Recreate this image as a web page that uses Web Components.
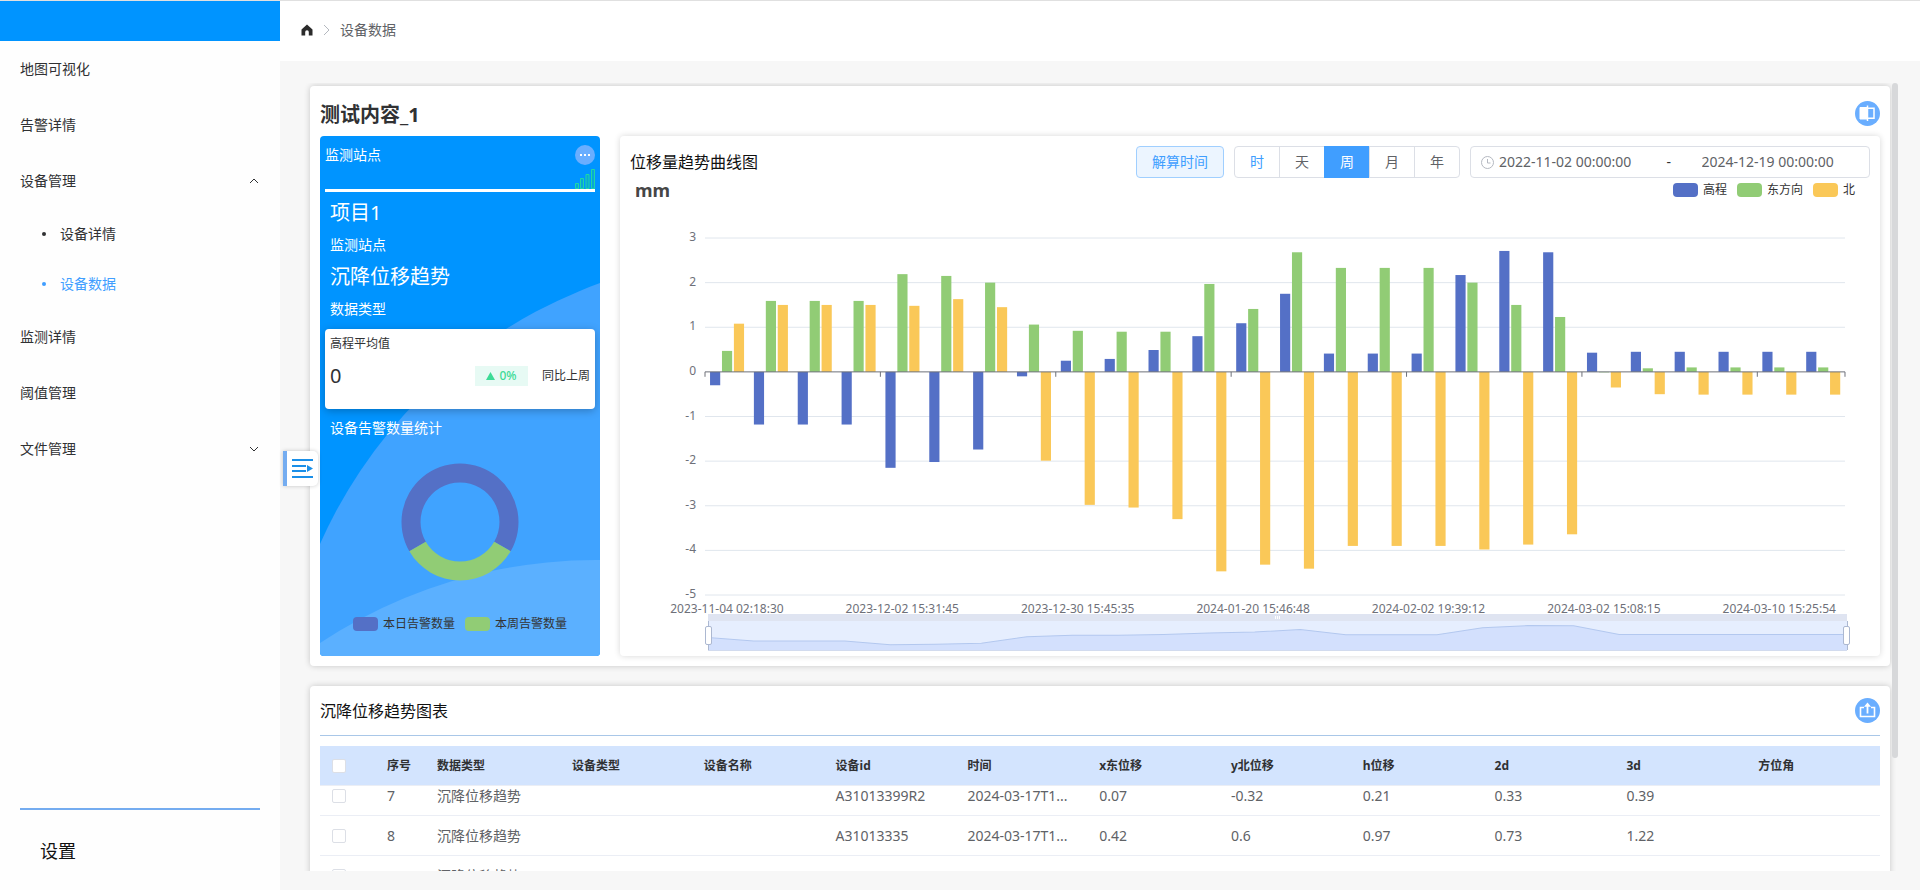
<!DOCTYPE html>
<html lang="zh-CN">
<head>
<meta charset="utf-8">
<title>设备数据</title>
<style>
  html, body { margin: 0; height: 100%; }
  body {
    font-family: "Noto Sans", "Noto Sans CJK SC", sans-serif;
    font-size: 14px; line-height: 20px; color: #303133; background: #f7f7f7;
  }
</style>
</head>
<body>
<app-shell>
  <side-nav slot="nav">
    <nav-item>地图可视化</nav-item>
    <nav-item>告警详情</nav-item>
    <nav-item arrow="up">设备管理</nav-item>
    <nav-item sub>设备详情</nav-item>
    <nav-item sub active>设备数据</nav-item>
    <nav-item>监测详情</nav-item>
    <nav-item>阈值管理</nav-item>
    <nav-item arrow="down">文件管理</nav-item>
    <a slot="footer" href="#settings">设置</a>
  </side-nav>
  <top-bar slot="top">设备数据</top-bar>

  <page-card>
    <h2 slot="title" style="margin:0;font-size:20px;line-height:38px">测试内容_1</h2>
    <round-button slot="action" label="对比" icon="split"></round-button>
    <panel-row>
      <station-panel slot="aside"></station-panel>
      <trend-card>位移量趋势曲线图</trend-card>
    </panel-row>
  </page-card>

  <page-card ruled>
    <h3 slot="title" style="margin:0;font-size:16px;font-weight:400;line-height:30px;color:#111">沉降位移趋势图表</h3>
    <round-button slot="action" label="导出" icon="export"></round-button>
    <record-table></record-table>
  </page-card>
</app-shell>

<script>
const define = (name, html, setup) => customElements.define(name, class extends HTMLElement {
  connectedCallback() {
    if (this.shadowRoot) return;
    const tpl = document.createElement('template');
    tpl.innerHTML = typeof html === 'function' ? html(this) : html;
    this.attachShadow({ mode: 'open' }).append(tpl.content.cloneNode(true));
    if (setup) setup(this, this.shadowRoot);
  }
});

/* ---------- page frame ---------- */
define('app-shell', `
<style>
  :host { display: flex; height: 100vh; border-top: 1px solid #e0e0e0; box-sizing: border-box; }
  main { flex: 1; min-width: 0; display: flex; flex-direction: column; position: relative; }
  .view { flex: 1; min-height: 0; margin: 22px 22px 19px 20px; position: relative; overflow: hidden; }
  .content { display: flex; flex-direction: column; gap: 20px; padding: 3px 8px 0 10px; }
  .thumb { position: absolute; top: 0; right: 0; width: 6px; height: 675px; border-radius: 3px; background: #d7d8da; }
  .toggle { position: absolute; left: 3px; top: 450px; width: 35px; height: 35px; padding: 0 0 0 4px; border: 0;
    border-left: 4px solid #74acf0; border-radius: 0 5px 5px 0; background: #fff; box-shadow: 0 0 4px rgba(0,0,0,.2); }
  svg { display: block; }
</style>
<slot name="nav"></slot>
<main>
  <slot name="top"></slot>
  <div class="view"><div class="content"><slot></slot></div><div class="thumb"></div></div>
  <button class="toggle" aria-label="展开面板">
    <svg width="24" height="21" viewBox="0 0 24 21" fill="none" stroke="#1a8fe8" stroke-width="2">
      <path d="M1 2H22M1 8H15M1 13H15M1 19H22"/><path d="M16 7L22 10.500L16 14Z" fill="#1a8fe8" stroke="none"/>
    </svg>
  </button>
</main>`);

define('side-nav', `
<style>
  :host { display: flex; flex-direction: column; flex: 0 0 280px; background: #fefefe; }
  .brand { height: 40px; background: #0094ff; }
  nav { flex: 1; }
  footer { margin: 0 20px; border-top: 2px solid #74acf0; padding: 23px 20px 22px; height: 35px; }
  ::slotted(a) { font-size: 18px; line-height: 36px; color: #111; text-decoration: none; }
</style>
<div class="brand"></div>
<nav><slot></slot></nav>
<footer><slot name="footer"></slot></footer>`);

define('nav-item', `
<style>
  :host { display: block; }
  a { display: flex; align-items: center; height: 56px; padding: 0 20px; color: #303133; text-decoration: none; }
  :host([sub]) a { height: 50px; padding: 0 20px 0 42px; gap: 14px; }
  :host([active]) a { color: #409eff; }
  i { display: none; width: 4px; height: 4px; border-radius: 50%; background: currentColor; }
  :host([sub]) i { display: block; }
  span { flex: 1; }
  svg { display: none; fill: none; stroke: #303133; }
  :host([arrow]) svg { display: block; }
  :host([arrow="up"]) svg { transform: rotate(180deg); }
</style>
<a href="#"><i></i><span><slot></slot></span>
<svg width="12" height="12" viewBox="0 0 12 12"><path d="M2 4L6 8L10 4"/></svg></a>`);

define('top-bar', `
<style>
  :host { display: flex; align-items: center; gap: 10px; height: 60px; padding: 0 20px 2px; background: #fff; color: #606266; box-sizing: border-box; }
  a { display: flex; padding-left: 1px; }
</style>
<a href="#" aria-label="首页"><svg width="12" height="12" viewBox="0 0 12 12"><path d="M6 .5L11.500 5.500V11.500H7.800V8A1.800 1.800 0 0 0 4.200 8V11.500H.5V5.500Z" fill="#2b2b2b"/></svg></a>
<svg width="7" height="12" viewBox="0 0 7 12" fill="none" stroke="#b4b8bf"><path d="M1 1L6 6L1 11"/></svg>
<span><slot></slot></span>`);

define('page-card', `
<style>
  :host { display: block; background: #fff; border-radius: 4px; padding: 10px; box-shadow: 0 0 6px rgba(0,0,0,.2); }
  header { display: flex; justify-content: space-between; align-items: flex-start; height: 40px; }
  .act { padding-top: 5px; }
  :host([ruled]) header { height: 39px; margin-bottom: 10px; border-bottom: 1px solid #a9c7e8; }
  :host([ruled]) .act { padding-top: 2px; }
</style>
<header><slot name="title"></slot><div class="act"><slot name="action"></slot></div></header>
<slot></slot>`);

const ICONS = {
  split: '<path d="M5 6.500H12V18H5Z" fill="#fff"/><path d="M12.500 4.500V20" stroke-width="1.500"/><path d="M13 7.200H19V17.300H13" stroke-width="1.500"/>',
  export: '<path d="M9 9.500H5.500V18.500H19.500V9.500H16" stroke-width="1.600"/><path d="M12.500 15.500V8" stroke-width="1.800"/><path d="M12.500 4.500L16 8.800H9Z" fill="#fff" stroke="none"/>',
};
define('round-button', el => `
<style>
  :host { display: block; }
  button { display: block; width: 25px; height: 25px; padding: 0; border: 0; border-radius: 50%; background: #6aaeff; }
  svg { display: block; }
</style>
<button aria-label="${el.getAttribute('label')}"><svg width="25" height="25" viewBox="0 0 25 25" fill="none" stroke="#fff">${ICONS[el.getAttribute('icon')]}</svg></button>`);

define('panel-row', `
<style>:host { display: grid; grid-template-columns: 280px minmax(0, 1fr); gap: 20px; }</style>
<slot name="aside"></slot><slot></slot>`);

/* ---------- legend ---------- */
define('legend-key', el => `
<style>
  :host { display: flex; align-items: center; gap: 5px; font-size: 12px; line-height: 16px; color: #333; }
  i { width: 25px; height: 14px; border-radius: 4px; background: ${el.getAttribute('color')}; }
</style><i></i><slot></slot>`);

/* ---------- station panel ---------- */
const arc = (a, b, R, r) => {
  const p = (d, q) => `${(60 + q * Math.cos(d * Math.PI / 180)).toFixed(2)} ${(60 + q * Math.sin(d * Math.PI / 180)).toFixed(2)}`;
  const big = b - a > 180 ? 1 : 0;
  return `M${p(a, R)}A${R} ${R} 0 ${big} 1 ${p(b, R)}L${p(b, r)}A${r} ${r} 0 ${big} 0 ${p(a, r)}Z`;
};
define('station-panel', `
<style>
  :host { display: block; position: relative; overflow: hidden; box-sizing: border-box; height: 520px; padding: 0 5px; border-radius: 4px;
    color: #fff; background: #0094ff; }
  .waves { position: absolute; left: 0; top: 0; }
  .body { position: relative; }
  .head { display: flex; justify-content: space-between; border-bottom: 3px solid #fff; line-height: 38px; }
  .tools { display: flex; flex-direction: column; gap: 4px; padding-top: 9px; }
  button { width: 20px; height: 20px; padding: 0; border: 0; border-radius: 50%; background: #6aaeff; }
  svg { display: block; }
  dl { margin: 4px 5px 0; display: flex; flex-direction: column; }
  dt { line-height: 34px; font-size: 20px; }
  dd { margin: 0; line-height: 30px; }
  .stat { margin-top: 5px; padding: 5px 5px 23px; border-radius: 4px; background: #fff; color: #303133; font-size: 12px;
    box-shadow: 0 2px 8px rgba(0,0,0,.25); }
  .row { display: flex; align-items: center; margin-top: 12px; }
  .row b { flex: 1; font-size: 20px; font-weight: 400; }
  .badge { display: flex; align-items: center; justify-content: center; gap: 4px; width: 53px; margin-right: 14px; background: #e7faf4; color: #3ddb96; font-weight: 500; }
  .badge svg { fill: currentColor; }
  h4 { margin: 0 5px; font-size: 14px; font-weight: 400; line-height: 38px; }
  .donut { margin: 15px auto 34px; }
  .keys { display: flex; justify-content: center; gap: 10px; }
</style>
<svg class="waves" width="280" height="520"><circle cx="446" cy="606" r="488" fill="#40a3ff"/><circle cx="276" cy="924" r="500" fill="#5bb0ff"/></svg>
<div class="body">
  <div class="head"><span>监测站点</span>
    <div class="tools">
      <button aria-label="更多"><svg width="20" height="20"><path d="M5 9h2v2H5zM9 9h2v2H9zM13 9h2v2h-2z" fill="#fff"/></svg></button>
      <svg width="20" height="20" fill="#08a6d8" stroke="#1fd8a4"><path d="M.5 14.500h3v5h-3zM5.500 9.500h3v10h-3zM11 5.500h3v14h-3zM16.500 .5h3v19h-3z"/></svg>
    </div>
  </div>
  <dl><dt>项目1</dt><dd>监测站点</dd><dt>沉降位移趋势</dt><dd>数据类型</dd></dl>
  <div class="stat"><div>高程平均值</div>
    <div class="row"><b>0</b><span class="badge"><svg width="9" height="8" viewBox="0 0 9 8"><path d="M4.500 0L9 8H0Z"/></svg>0%</span><span>同比上周</span></div></div>
  <h4>设备告警数量统计</h4>
  <svg class="donut" width="120" height="120"><path d="${arc(150, 390, 58.500, 39.500)}" fill="#5470c6"/><path d="${arc(30, 150, 58.500, 39.500)}" fill="#91cc75"/></svg>
  <div class="keys"><legend-key color="#5470c6">本日告警数量</legend-key><legend-key color="#91cc75">本周告警数量</legend-key></div>
</div>`);

/* ---------- trend chart card ---------- */
define('trend-card', `
<style>
  :host { display: block; box-sizing: border-box; padding: 10px 10px 5px; border-radius: 4px; background: #fff; box-shadow: 0 0 6px rgba(0,0,0,.16); }
  header { display: flex; align-items: center; gap: 10px; }
  h3 { flex: 1; margin: 0; font-size: 16px; font-weight: 400; color: #111; }
  .solve { box-sizing: border-box; width: 88px; height: 32px; padding: 0; border: 1px solid #a0cfff; border-radius: 4px; background: #ecf5ff;
    color: #409eff; font: inherit; }
  fieldset { display: flex; margin: 0; padding: 0; border: 1px solid #dcdfe6; border-radius: 4px; }
  label { position: relative; width: 44px; line-height: 30px; text-align: center; color: #606266; }
  label + label { border-left: 1px solid #dcdfe6; }
  label input { position: absolute; inset: 0; margin: 0; opacity: 0; }
  label.hot { color: #409eff; }
  label:has(:checked) { background: #409eff; border-color: #409eff; color: #fff; box-shadow: 0 -1px #409eff, 0 1px #409eff; z-index: 1; }
  .range { box-sizing: border-box; display: flex; align-items: center; width: 400px; height: 32px; padding: 0 0 0 10px; border: 1px solid #dcdfe6; border-radius: 4px; }
  .range input { box-sizing: border-box; flex: 1; min-width: 0; padding: 0 0 0 5px; border: 0; background: none; color: #606266; font: inherit; }
  .range span { width: 30px; color: #303133; }
</style>
<header>
  <h3><slot></slot></h3>
  <button class="solve">解算时间</button>
  <fieldset aria-label="周期">
    <label class="hot"><input type="radio" name="p">时</label><label><input type="radio" name="p">天</label><label><input type="radio" name="p" checked>周</label><label><input type="radio" name="p">月</label><label><input type="radio" name="p">年</label>
  </fieldset>
  <div class="range">
    <svg width="13" height="13" viewBox="0 0 13 13" fill="none" stroke="#b4b8c0"><circle cx="6.500" cy="6.500" r="6"/><path d="M6.500 3V7H9.500"/></svg>
    <input aria-label="开始时间" value="2022-11-02 00:00:00"><span>-</span><input aria-label="结束时间" value="2024-12-19 00:00:00">
  </div>
</header>
<trend-chart></trend-chart>`);

const ELEV = [-.3,-1.18,-1.18,-1.18,-2.15,-2.02,-1.74,-.1,.25,.29,.49,.8,1.09,1.75,.41,.41,.41,2.17,2.71,2.68,.43,.45,.45,.45,.45,.45];
const EAST = [.47,1.59,1.59,1.59,2.19,2.15,2,1.06,.92,.9,.9,1.97,1.41,2.68,2.33,2.33,2.33,2,1.5,1.23,-.01,.08,.1,.1,.1,.1];
const NORTH = [1.08,1.5,1.5,1.5,1.48,1.63,1.45,-1.99,-2.98,-3.04,-3.3,-4.47,-4.32,-4.41,-3.9,-3.9,-3.9,-3.98,-3.87,-3.64,-.35,-.5,-.51,-.51,-.51,-.51];
const TIMES = ['2023-11-04 02:18:30','2023-12-02 15:31:45','2023-12-30 15:45:35','2024-01-20 15:46:48','2024-02-02 19:39:12','2024-03-02 15:08:15','2024-03-10 15:25:54'];
const bars = (data, color, k) => `<g fill="${color}">${data.map((v, i) =>
  `<rect x="${(i + .115 + k * .272).toFixed(3)}" width=".232" y="${(3 - Math.max(v, 0)).toFixed(2)}" height="${Math.abs(v)}"/>`).join('')}</g>`;
const trace = ELEV.map((v, i) => `${i} ${(15.3 - v * 3.94).toFixed(1)}`).join('L');

define('trend-chart', `
<style>
  :host { display: block; }
  .top { display: flex; justify-content: space-between; height: 24px; padding: 0 15px 0 5px; }
  h4 { margin: 0; font-size: 18px; line-height: 24px; color: #464646; }
  .keys { display: flex; align-items: center; gap: 10px; }
  .chart { display: grid; grid-template-columns: 66px minmax(0, 1fr); column-gap: 9px; margin: 36px 25px 0 0; color: #6e7079; font-size: 12px; }
  ol { display: flex; flex-direction: column; justify-content: space-between; margin: -8px 0 -6px; padding: 0; list-style: none; text-align: right; line-height: 14px; }
  svg { display: block; width: 100%; overflow: visible; }
  .plot { height: 357px; }
  line, .edge { vector-effect: non-scaling-stroke; shape-rendering: crispEdges; }
  .x { grid-column: 2; display: grid; grid-template-columns: repeat(26, minmax(0, 1fr)); line-height: 14px; padding-top: 7px; }
  .x span { grid-row: 1; display: flex; justify-content: center; white-space: nowrap; }
  .zoom { grid-column: 2; position: relative; margin: -2px -2px 0 3px; height: 37px; background: #e6eefe; border-top: 7px solid #dfe4f1;
    border-bottom: 1px solid #d2dbee; box-sizing: border-box; }
  .zoom svg { height: 29px; }
  .zoom i { position: absolute; top: 5px; width: 5px; height: 17px; border: 1px solid #acb8d1; border-radius: 2px; background: #fff; }
  .zoom i:first-of-type { left: -3px; }
  .zoom i:last-of-type { right: -3px; }
  .zoom b { position: absolute; top: -5px; left: 50%; width: 5px; height: 3px; margin-left: -3px;
    background: repeating-linear-gradient(90deg, #fff 0 1px, transparent 1px 2px); }
</style>
<div class="top"><h4>mm</h4><div class="keys"><legend-key color="#5470c6">高程</legend-key><legend-key color="#91cc75">东方向</legend-key><legend-key color="#fac858">北</legend-key></div></div>
<div class="chart">
  <ol>${[3,2,1,0,-1,-2,-3,-4,-5].map(n => `<li>${n}</li>`).join('')}</ol>
  <svg class="plot" viewBox="0 0 26 8" preserveAspectRatio="none">
    <g stroke="#e0e6ed">${[0,1,2,4,5,6,7,8].map(y => `<line x2="26" y1="${y}" y2="${y}"/>`).join('')}</g>
    ${bars(ELEV, '#5470c6', 0)}${bars(EAST, '#91cc75', 1)}${bars(NORTH, '#fac858', 2)}
    <g stroke="#6e7079"><line x2="26" y1="3" y2="3"/>${[0,4,8,12,16,20,24,26].map(x => `<line x1="${x}" x2="${x}" y1="3" y2="3.110"/>`).join('')}</g>
  </svg>
  <div class="x">${TIMES.map((t, i) => `<span style="grid-column:${i * 4 + 1}">${t}</span>`).join('')}</div>
  <div class="zoom">
    <svg viewBox="0 0 25 29" preserveAspectRatio="none"><path d="M${trace}V29H0Z" fill="#d3e0fd"/><path d="M${trace}" fill="none" stroke="#b3c8ef" vector-effect="non-scaling-stroke"/>
    <path class="edge" d="M0 0V29M25 0V29" stroke="#acb8d1"/></svg>
    <i></i><i></i><b></b>
  </div>
</div>`);

/* ---------- table ---------- */
const HEAD = ['序号','数据类型','设备类型','设备名称','设备id','时间','x东位移','y北位移','h位移','2d','3d','方位角'];
const ROWS = [
  ['7','沉降位移趋势','','','A31013399R2','2024-03-17T1...','0.07','-0.32','0.21','0.33','0.39',''],
  ['8','沉降位移趋势','','','A31013335','2024-03-17T1...','0.42','0.6','0.97','0.73','1.22',''],
  ['9','沉降位移趋势','','','A31013395R2','2024-03-17T1...','0.56','0.9','0.48','0.65','0.69',''],
];
define('record-table', `
<style>
  :host { display: block; height: 160px; overflow: hidden; }
  table { width: 100%; border-collapse: separate; border-spacing: 0; table-layout: fixed; color: #606266; margin-bottom: 60px; }
  col:nth-child(1) { width: 57px; } col:nth-child(2) { width: 50px; } col:nth-child(3) { width: 135px; }
  th, td { box-sizing: border-box; height: 40px; padding: 0 10px; border-bottom: 1px solid #ebeef5; text-align: left; white-space: nowrap; }
  th { position: sticky; top: 0; z-index: 1; background: #d3e4fe; color: #303133; font-size: 12px; }
  th:first-child, td:first-child { padding-left: 12px; }
  input { appearance: none; display: block; box-sizing: border-box; width: 14px; height: 14px; margin: 0; border: 1px solid #dcdfe6; border-radius: 2px; background: #fff; }
</style>
<table>
  <colgroup>${'<col>'.repeat(13)}</colgroup>
  <thead><tr><th><input type="checkbox" aria-label="全选"></th>${HEAD.map(h => `<th>${h}</th>`).join('')}</tr></thead>
  <tbody>${ROWS.map(r => `<tr><td><input type="checkbox" aria-label="选择 ${r[0]}"></td>${r.map(c => `<td>${c}</td>`).join('')}</tr>`).join('')}</tbody>
</table>`, el => { el.scrollTop = 10; });
</script>
</body>
</html>
